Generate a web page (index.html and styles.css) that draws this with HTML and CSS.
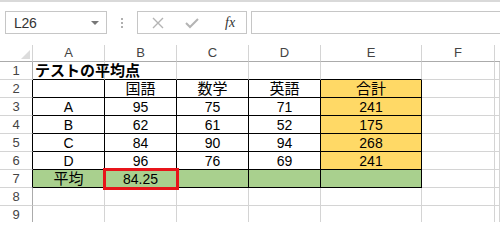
FILE: index.html
```html
<!DOCTYPE html>
<html lang="ja">
<head>
<meta charset="utf-8">
<title>テストの平均点</title>
<link rel="stylesheet" href="styles.css">
</head>
<body>
<div class="toolbar">
  <div class="namebox"><span class="ref">L26</span><span class="drop"></span></div>
  <div class="dots"><i></i><i></i><i></i></div>
  <div class="fxbox">
    <svg class="ico" width="14" height="14" viewBox="0 0 14 14"><path d="M2 2 L12 12 M12 2 L2 12" stroke="#b4b4b4" stroke-width="1.4" fill="none"/></svg>
    <svg class="ico" width="16" height="14" viewBox="0 0 16 14"><path d="M2 7 L6 11 L14 3" stroke="#b4b4b4" stroke-width="2" fill="none"/></svg>
    <span class="fx">fx</span>
  </div>
  <div class="formula"></div>
</div>
<div class="sheet">
  <div class="ch corner"><span class="tri"></span></div>
  <div class="ch">A</div><div class="ch">B</div><div class="ch">C</div><div class="ch">D</div><div class="ch">E</div><div class="ch">F</div><div class="ch last"></div>

  <div class="rh">1</div>
  <div class="c bb title">テストの平均点</div><div class="c bb"></div><div class="c bb"></div><div class="c bb"></div><div class="c bb"></div><div class="c"></div><div class="c"></div>

  <div class="rh br">2</div>
  <div class="c bk"></div><div class="c bk j">国語</div><div class="c bk j">数学</div><div class="c bk j">英語</div><div class="c bk yel j">合計</div><div class="c"></div><div class="c"></div>

  <div class="rh br">3</div>
  <div class="c bk">A</div><div class="c bk">95</div><div class="c bk">75</div><div class="c bk">71</div><div class="c bk yel">241</div><div class="c"></div><div class="c"></div>

  <div class="rh br">4</div>
  <div class="c bk">B</div><div class="c bk">62</div><div class="c bk">61</div><div class="c bk">52</div><div class="c bk yel">175</div><div class="c"></div><div class="c"></div>

  <div class="rh br">5</div>
  <div class="c bk">C</div><div class="c bk">84</div><div class="c bk">90</div><div class="c bk">94</div><div class="c bk yel">268</div><div class="c"></div><div class="c"></div>

  <div class="rh br">6</div>
  <div class="c bk">D</div><div class="c bk">96</div><div class="c bk">76</div><div class="c bk">69</div><div class="c bk yel">241</div><div class="c"></div><div class="c"></div>

  <div class="rh br">7</div>
  <div class="c bk grn j">平均</div><div class="c bk grn sel">84.25</div><div class="c bk grn"></div><div class="c bk grn"></div><div class="c bk grn"></div><div class="c"></div><div class="c"></div>

  <div class="rh">8</div>
  <div class="c"></div><div class="c"></div><div class="c"></div><div class="c"></div><div class="c"></div><div class="c"></div><div class="c"></div>

  <div class="rh">9</div>
  <div class="c"></div><div class="c"></div><div class="c"></div><div class="c"></div><div class="c"></div><div class="c"></div><div class="c"></div>
</div>
</body>
</html>
```

FILE: styles.css
```css
* { box-sizing: border-box; }
html, body { margin: 0; padding: 0; background: #fff; overflow: hidden; }
body {
  width: 500px;
  height: 222px;
  font-family: "Liberation Sans", "Noto Sans CJK JP", sans-serif;
  color: #000;
}
.toolbar {
  height: 45px;
  border-top: 2px solid #d9d9d9;
  display: flex;
  align-items: flex-start;
  padding-top: 9px;
}
.namebox {
  margin-left: 5px;
  width: 102px;
  height: 23px;
  border: 1px solid #c6c6c6;
  display: flex;
  align-items: center;
  justify-content: space-between;
  padding: 0 7px 0 8px;
}
.ref { font-size: 14px; color: #333; letter-spacing: -0.3px; }
.drop {
  width: 0; height: 0;
  border-left: 4px solid transparent;
  border-right: 4px solid transparent;
  border-top: 4px solid #777;
}
.dots {
  width: 30px;
  height: 23px;
  display: flex;
  flex-direction: column;
  align-items: center;
  justify-content: center;
  gap: 2px;
}
.dots i { display: block; width: 2px; height: 2px; background: #b0b0b0; }
.fxbox {
  width: 110px;
  height: 23px;
  border: 1px solid #c6c6c6;
  display: flex;
  align-items: center;
  padding-left: 13px;
  gap: 19px;
}
.fx {
  font-family: "Liberation Serif", serif;
  font-style: italic;
  font-size: 14px;
  color: #333;
  margin-left: 6px;
}
.formula {
  margin-left: 4px;
  flex: 1;
  height: 23px;
  border: 1px solid #c6c6c6;
  border-right: none;
}
.sheet {
  position: relative;
  display: grid;
  grid-template-columns: 33px 72px 72px 72px 72px 101px 73px 5px;
  grid-template-rows: 17px repeat(9, 18px);
}
.ch {
  border-bottom: 1px solid #ababab;
  border-right: 1px solid #d4d4d4;
  font-size: 13px;
  color: #444;
  text-align: center;
  line-height: 16px;
}
.ch.last { border-right: none; }
.corner { position: relative; }
.tri {
  position: absolute;
  right: 2px;
  bottom: 2px;
  width: 0; height: 0;
  border-left: 9px solid transparent;
  border-bottom: 9px solid #dcdcdc;
}
.rh {
  border-right: 1px solid #ababab;
  border-bottom: 1px solid #d4d4d4;
  font-size: 13px;
  color: #444;
  text-align: center;
  line-height: 18px;
}
.rh.br { border-right-color: #000; }
.c {
  border-right: 1px solid #d4d4d4;
  border-bottom: 1px solid #d4d4d4;
  font-size: 14px;
  text-align: center;
  line-height: 18px;
  white-space: nowrap;
}
.c.j { font-size: 15px; line-height: 17px; }
.c.bb { border-bottom-color: #000; }
.c.bk { border-right-color: #000; border-bottom-color: #000; }
.title {
  text-align: left;
  font-weight: bold;
  font-size: 15px;
  line-height: 17px;
  padding-left: 2px;
  overflow: visible;
}
.yel { background: #ffd966; }
.grn { background: #a9d08e; }
.sel { position: relative; }
.sel::after {
  content: "";
  position: absolute;
  left: -2px;
  top: -2px;
  right: -3px;
  bottom: -3px;
  border: 3px solid #e8141a;
}
```
